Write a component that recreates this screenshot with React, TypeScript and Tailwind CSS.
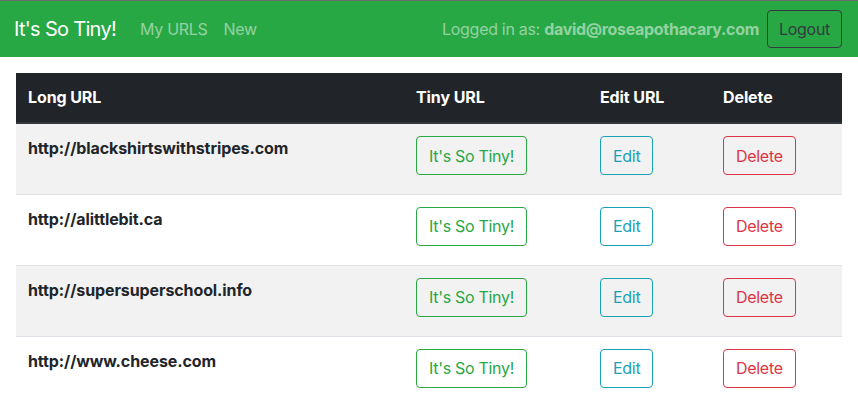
import React from 'react';

const urls = [
  'http://blackshirtswithstripes.com',
  'http://alittlebit.ca',
  'http://supersuperschool.info',
  'http://www.cheese.com',
];

export default function App() {
  return (
    <div className="min-h-screen bg-white font-['Inter',sans-serif] text-[16px] tracking-[-0.3px] text-[#212529]">
      <nav className="flex h-[57px] items-center justify-between border-t border-[#6b6b6b] bg-[#28a745] px-4">
        <div className="flex items-center">
          <a href="#" className="-ml-0.5 mr-6 text-[20px] leading-[30px] tracking-[-0.7px] text-white">
            It's So Tiny!
          </a>
          <a href="#" className="mr-4 text-white/50">My URLS</a>
          <a href="#" className="text-white/50">New</a>
        </div>
        <div className="flex items-center text-white/50">
          <span>
            Logged in as: <b>david@roseapothacary.com</b>
          </span>
          <button className="ml-2 h-[38px] rounded-[4px] border border-[#343a40] px-[11px] text-[#343a40]">
            Logout
          </button>
        </div>
      </nav>

      <div className="mt-4 px-4">
        <table className="w-full table-fixed border-collapse text-left">
          <thead>
            <tr className="bg-[#212529] text-white tracking-[-0.1px]">
              <th className="w-[388px] border-b-2 border-[#32383e] px-3 pt-3 pb-[13px] leading-6 font-bold">Long URL</th>
              <th className="w-[184px] border-b-2 border-[#32383e] px-3 pt-3 pb-[13px] leading-6 font-bold">Tiny URL</th>
              <th className="w-[123px] border-b-2 border-[#32383e] px-3 pt-3 pb-[13px] leading-6 font-bold">Edit URL</th>
              <th className="border-b-2 border-[#32383e] px-3 pt-3 pb-[13px] leading-6 font-bold">Delete</th>
            </tr>
          </thead>
          <tbody>
            {urls.map((url, i) => (
              <tr key={url} className={i % 2 === 0 ? 'bg-[#f2f2f2]' : 'bg-white'}>
                <td className="h-[71px] border-t border-[#dee2e6] px-3 pt-3 align-top leading-6 font-bold tracking-[-0.1px]">{url}</td>
                <td className="border-t border-[#dee2e6] px-3 pt-3 align-top">
                  <button className="h-[39px] rounded-[4px] border border-[#28a745] px-3 text-[#28a745]">
                    It's So Tiny!
                  </button>
                </td>
                <td className="border-t border-[#dee2e6] px-3 pt-3 align-top">
                  <button className="h-[39px] rounded-[4px] border border-[#17a2b8] px-3 text-[#17a2b8]">
                    Edit
                  </button>
                </td>
                <td className="border-t border-[#dee2e6] px-3 pt-3 align-top">
                  <button className="h-[39px] rounded-[4px] border border-[#dc3545] px-3 text-[#dc3545]">
                    Delete
                  </button>
                </td>
              </tr>
            ))}
          </tbody>
        </table>
      </div>
    </div>
  );
}
